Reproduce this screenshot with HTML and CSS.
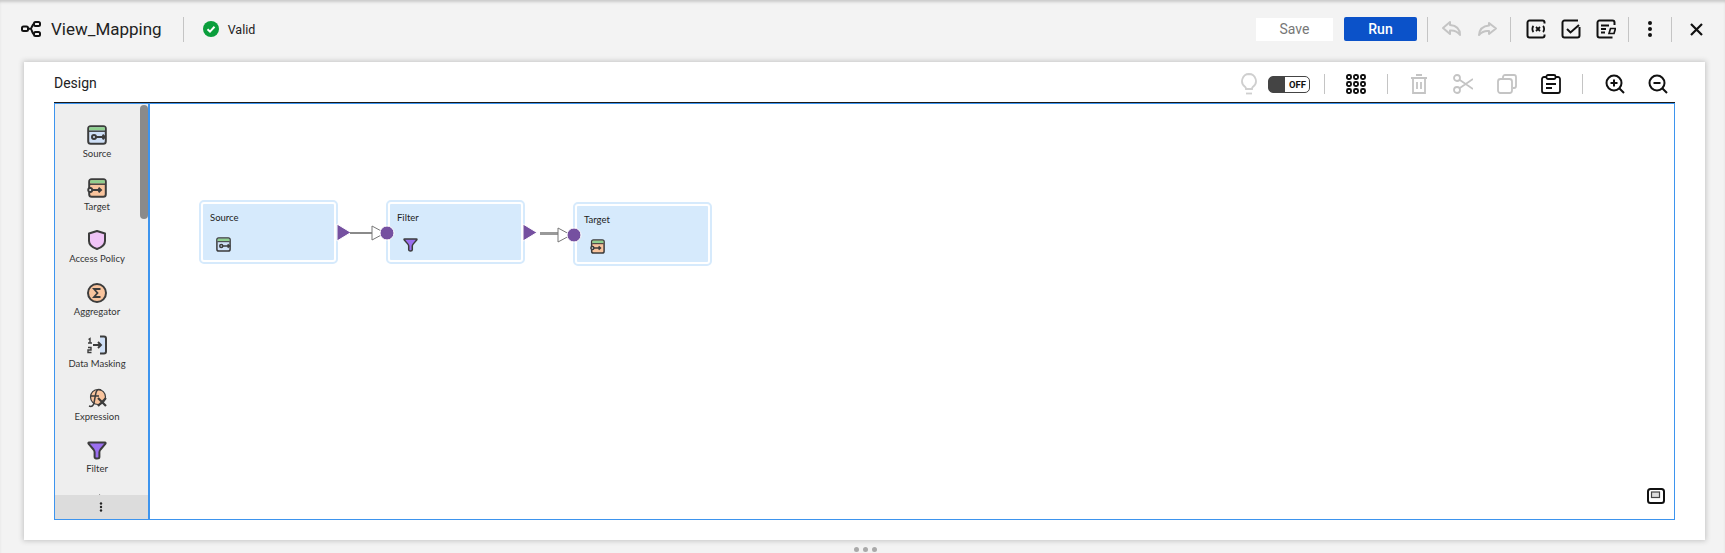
FILE: index.html
```html
<!doctype html>
<html lang="en">
<head>
  <meta charset="UTF-8">
  <title>View_Mapping</title>
  <link rel="stylesheet" href="styles.css">
</head>
<body>
  <svg class="defs" width="0" height="0">
    <symbol id="i-source" viewBox="0 0 20 20">
      <rect x="1.2" y="1.2" width="17.6" height="17.6" rx="2.5" fill="#cfe0f7" stroke="#3c3c3c" stroke-width="2"/>
      <rect x="2.2" y="2.2" width="15.6" height="3.2" fill="#8fd08f"/>
      <path d="M2 6.2h16" stroke="#3c3c3c" stroke-width="1.4"/>
      <circle cx="7" cy="12" r="2" fill="none" stroke="#3c3c3c" stroke-width="2"/>
      <path d="M9 12h9M15.5 9.8l2.5 2.2-2.500 2.200" fill="none" stroke="#3c3c3c" stroke-width="1.900"/>
    </symbol>
    <symbol id="i-target" viewBox="0 0 20 20">
      <rect x="2.2" y="1.2" width="16.6" height="17.6" rx="2.5" fill="#f9c49d" stroke="#3c3c3c" stroke-width="2"/>
      <rect x="3.2" y="2.2" width="14.6" height="3.2" fill="#8fd08f"/>
      <path d="M3 6.2h15" stroke="#3c3c3c" stroke-width="1.4"/>
      <circle cx="3.2" cy="12" r="2" fill="#eee" stroke="#3c3c3c" stroke-width="1.900"/>
      <path d="M5.2 12h9M11.5 9.8l2.5 2.200-2.500 2.200" fill="none" stroke="#3c3c3c" stroke-width="1.900"/>
    </symbol>
    <symbol id="i-filter" viewBox="0 0 20 20">
      <path d="M2 2.500h16c.6 0 .8.600.5 1.100L13.500 9.500c-.7.900-1.100 1.600-1.100 2.800V17c0 1-1 1.500-2.400 1.500s-2.400-.5-2.400-1.500v-4.700c0-1.200-.4-1.900-1.100-2.800L1.500 3.600C1.200 3.100 1.400 2.500 2 2.500z" fill="#9b6ff0" stroke="#3c3c3c" stroke-width="2" stroke-linejoin="round"/>
    </symbol>
  </svg>

  <div class="page">
    <header class="topbar">
      <svg class="map-icon" width="20" height="16" viewBox="0 0 20 16" fill="none" stroke="#111" stroke-width="2">
        <rect x="1" y="5.500" width="6" height="4.500" rx="1.500"/>
        <rect x="13" y="1" width="6" height="4" rx="1.500"/>
        <rect x="13" y="11" width="6" height="4" rx="1.500"/>
        <path d="M7 7.700h2.500c1.500 0 1.500-4.700 3.500-4.700M9.500 7.700c1.500 0 1.500 5.300 3.500 5.300"/>
      </svg>
      <h1 class="title">View_Mapping</h1>
      <span class="sep sep-title"></span>
      <svg class="valid-icon" width="16" height="16" viewBox="0 0 16 16">
        <circle cx="8" cy="8" r="8" fill="#0a9e3c"/>
        <path d="M4.500 8.200l2.500 2.400 4.500-4.800" fill="none" stroke="#fff" stroke-width="2"/>
      </svg>
      <span class="valid-text">Valid</span>

      <div class="top-actions">
        <button class="btn btn-save">Save</button>
        <button class="btn btn-run">Run</button>
        <span class="sep sep-run"></span>
        <svg class="ic-undo" width="21" height="18" viewBox="0 0 21 18" fill="none" stroke="#c4c4c4" stroke-width="2" stroke-linejoin="round">
          <path d="M9 2L2 8l7 6v-3.500c4-.5 7 .5 10 4.500 0-6-4-9.500-10-10V2z"/>
        </svg>
        <svg class="ic-redo" width="21" height="18" viewBox="0 0 21 18" fill="none" stroke="#c4c4c4" stroke-width="2" stroke-linejoin="round">
          <path d="M12 3l7 5.500-7 5.500v-3c-4-.5-7 .5-10 4 .5-5.500 4-9 10-9.500V3z"/>
        </svg>
        <span class="sep sep-edit"></span>
        <svg class="ic" width="20" height="20" viewBox="0 0 20 20" fill="none" stroke="#111" stroke-width="2">
          <path d="M18.500 4.500V3.500a2 2 0 0 0-2-2h-13a2 2 0 0 0-2 2v13a2 2 0 0 0 2 2h13a2 2 0 0 0 2-2v-1"/>
          <path d="M7.500 7c-1.500 1.500-1.500 4.500 0 6M17 7c1.500 1.500 1.500 4.500 0 6M10 8l4 4M14 8l-4 4" stroke-width="1.800"/>
        </svg>
        <svg class="ic" width="20" height="20" viewBox="0 0 20 20" fill="none" stroke="#111" stroke-width="2">
          <path d="M18.500 8v8.500a2 2 0 0 1-2 2h-13a2 2 0 0 1-2-2v-13a2 2 0 0 1 2-2H17"/>
          <path d="M6 10l3.500 3.500L18 6"/>
        </svg>
        <svg class="ic" width="20" height="20" viewBox="0 0 20 20" fill="none" stroke="#111" stroke-width="2">
          <path d="M18.500 6V3.500a2 2 0 0 0-2-2h-13a2 2 0 0 0-2 2v13a2 2 0 0 0 2 2h13"/>
          <path d="M5 6.500h8M5 10h5M5 13.500h4" stroke-width="1.800"/>
          <path d="M13 14.500l1.500-5h5l-1.500 5z" stroke-width="1.700"/>
        </svg>
        <span class="sep sep-more"></span>
        <svg class="ic-dots" width="6" height="16" viewBox="0 0 6 16" fill="#111">
          <circle cx="3" cy="2" r="2"/><circle cx="3" cy="8" r="2"/><circle cx="3" cy="14" r="2"/>
        </svg>
        <span class="sep sep-close"></span>
        <svg class="ic-close" width="13" height="13" viewBox="0 0 13 13" stroke="#111" stroke-width="2.200">
          <path d="M1 1l11 11M12 1L1 12"/>
        </svg>
      </div>
    </header>

    <section class="card">
      <div class="card-head">
        <span class="design">Design</span>
        <div class="tools">
          <svg class="t-bulb" width="16" height="22" viewBox="0 0 16 22" fill="none" stroke="#cfcfcf" stroke-width="1.800">
            <path d="M8 1a7 7 0 0 0-4 12.700c.8.700 1 1.300 1 2.300h6c0-1 .2-1.600 1-2.300A7 7 0 0 0 8 1z"/>
            <path d="M5 20.500h6"/>
          </svg>
          <span class="toggle"><span class="toggle-off">OFF</span></span>
          <span class="sep sep-a"></span>
          <svg class="t-grid" width="20" height="20" viewBox="0 0 20 20" fill="none" stroke="#111" stroke-width="1.900">
            <rect x="1" y="1" width="4" height="4" rx="1.500"/><rect x="8" y="1" width="4" height="4" rx="1.500"/><rect x="15" y="1" width="4" height="4" rx="1.500"/>
            <rect x="1" y="8" width="4" height="4" rx="1.500"/><rect x="8" y="8" width="4" height="4" rx="1.500"/><rect x="15" y="8" width="4" height="4" rx="1.500"/>
            <rect x="1" y="15" width="4" height="4" rx="1.500"/><rect x="8" y="15" width="4" height="4" rx="1.500"/><rect x="15" y="15" width="4" height="4" rx="1.500"/>
          </svg>
          <span class="sep sep-b"></span>
          <svg class="t-trash" width="16" height="20" viewBox="0 0 16 20" fill="none" stroke="#c4c4c4" stroke-width="1.800">
            <path d="M0 4h16M5 1h6M2 4v15h12V4M6 8v7M10 8v7"/>
          </svg>
          <svg class="t-cut" width="20" height="20" viewBox="0 0 20 20" fill="none" stroke="#c4c4c4" stroke-width="1.800">
            <circle cx="4" cy="4" r="3"/><circle cx="4" cy="16" r="3"/>
            <path d="M6.500 5.800L20 15M6.500 14.200L20 5"/>
          </svg>
          <svg class="t-copy" width="20" height="20" viewBox="0 0 20 20" fill="none" stroke="#c4c4c4" stroke-width="1.800">
            <path d="M6 4V3a2 2 0 0 1 2-2h9a2 2 0 0 1 2 2v9a2 2 0 0 1-2 2h-1"/>
            <rect x="1" y="5" width="14" height="14" rx="2.500"/>
          </svg>
          <svg class="t-paste" width="20" height="20" viewBox="0 0 20 20" fill="none" stroke="#111" stroke-width="1.800">
            <path d="M5 3H3a2 2 0 0 0-2 2v12a2 2 0 0 0 2 2h14a2 2 0 0 0 2-2V5a2 2 0 0 0-2-2h-2"/>
            <rect x="5.500" y="1" width="9" height="4" rx="1.500"/>
            <path d="M5 10h10M5 14h6"/>
          </svg>
          <span class="sep sep-c"></span>
          <svg class="t-zin" width="20" height="20" viewBox="0 0 20 20" fill="none" stroke="#111" stroke-width="2">
            <circle cx="9" cy="9" r="7.500"/><path d="M14.500 14.500L19 19M5.500 9h7M9 5.500v7"/>
          </svg>
          <svg class="t-zout" width="20" height="20" viewBox="0 0 20 20" fill="none" stroke="#111" stroke-width="2">
            <circle cx="9" cy="9" r="7.500"/><path d="M14.500 14.500L19 19M5.500 9h7"/>
          </svg>
        </div>
      </div>

      <div class="canvas">
        <aside class="palette">
          <div class="palette-items">
            <div class="pal-item">
              <svg width="20" height="20"><use href="#i-source"/></svg>
              <span>Source</span>
            </div>
            <div class="pal-item">
              <svg width="20" height="20"><use href="#i-target"/></svg>
              <span>Target</span>
            </div>
            <div class="pal-item">
              <svg width="20" height="20" viewBox="0 0 20 20">
                <path d="M10 1l8 2.500V11c0 4-3.500 6.500-8 8-4.500-1.500-8-4-8-8V3.500z" fill="#f0c4f7" stroke="#3c3c3c" stroke-width="2" stroke-linejoin="round"/>
              </svg>
              <span>Access Policy</span>
            </div>
            <div class="pal-item">
              <svg width="20" height="20" viewBox="0 0 20 20">
                <circle cx="10" cy="10" r="9" fill="#f9c49d" stroke="#3c3c3c" stroke-width="2"/>
                <path d="M13.500 6H7l3.500 4L7 14h6.500" fill="none" stroke="#3c3c3c" stroke-width="1.800"/>
              </svg>
              <span>Aggregator</span>
            </div>
            <div class="pal-item">
              <svg width="20" height="20" viewBox="0 0 20 20">
                <path d="M13 1.500h4a2 2 0 0 1 2 2v13a2 2 0 0 1-2 2h-4" fill="#cfe0f7" stroke="#3c3c3c" stroke-width="2"/>
                <path d="M6 10h8M11 7l3 3-3 3" fill="none" stroke="#3c3c3c" stroke-width="1.900"/>
                <path d="M1.500 4.500L3 3.500V8M1 8h4M1 12.500h3v2.500H1v2.500h3.500" fill="none" stroke="#3c3c3c" stroke-width="1.400"/>
              </svg>
              <span>Data Masking</span>
            </div>
            <div class="pal-item">
              <svg width="20" height="20" viewBox="0 0 20 20">
                <circle cx="11" cy="9" r="7.500" fill="#f9c49d" stroke="#3c3c3c" stroke-width="1.200"/>
                <path d="M14 2c-4-1.500-5 1-5.500 5L7 15c-.5 3-2.500 4-5 3M3.500 8H12" fill="none" stroke="#3c3c3c" stroke-width="1.500"/>
                <path d="M11 10l8 8M19 10l-8 8" stroke="#3c3c3c" stroke-width="2.200"/>
              </svg>
              <span>Expression</span>
            </div>
            <div class="pal-item">
              <svg width="20" height="20"><use href="#i-filter"/></svg>
              <span>Filter</span>
            </div>
            <div class="pal-item">
              <svg width="20" height="20" viewBox="0 0 20 20">
                <path d="M4 5h11M12 2l3 3-3 3" fill="none" stroke="#3c3c3c" stroke-width="1.800"/>
              </svg>
            </div>
          </div>
          <div class="scroll-thumb"></div>
          <div class="pal-more">
            <svg width="4" height="10" viewBox="0 0 4 10" fill="#222">
              <circle cx="2" cy="1.500" r="1.200"/><circle cx="2" cy="5" r="1.200"/><circle cx="2" cy="8.500" r="1.200"/>
            </svg>
          </div>
        </aside>

        <div class="board">
          <div class="node node-source">
            <span class="node-name">Source</span>
            <svg width="15" height="15"><use href="#i-source"/></svg>
          </div>
          <div class="node node-filter">
            <span class="node-name">Filter</span>
            <svg width="15" height="15"><use href="#i-filter"/></svg>
          </div>
          <div class="node node-target">
            <span class="node-name">Target</span>
            <svg width="15" height="15"><use href="#i-target"/></svg>
          </div>

          <!-- links between the nodes -->
          <svg class="links" width="600" height="100" viewBox="0 0 600 100">
            <g>
              <path d="M187 30l14 8.500-14 8.500z" fill="#7550a0" stroke="#fff" stroke-width="1"/>
              <path d="M200 39h22" stroke="#8a8a8a" stroke-width="2"/>
              <path d="M222 32l13 7-13 7z" fill="#fff" stroke="#777" stroke-width="1"/>
              <circle cx="237" cy="39" r="7" fill="#7550a0" stroke="#fff" stroke-width="1"/>
            </g>
            <g transform="translate(186 0)">
              <path d="M187 30l14 8.500-14 8.500z" fill="#7550a0" stroke="#fff" stroke-width="1"/>
              <path d="M204 39.500h18" stroke="#999" stroke-width="3"/>
              <path d="M222 34l13 7-13 7z" fill="#fff" stroke="#777" stroke-width="1"/>
              <circle cx="238" cy="41" r="7" fill="#7550a0" stroke="#fff" stroke-width="1"/>
            </g>
          </svg>

          <svg class="minimap" width="18" height="16" viewBox="0 0 18 16" fill="none">
            <rect x="1" y="1" width="16" height="14" rx="2.500" stroke="#111" stroke-width="2"/>
            <rect x="4.500" y="4" width="8" height="5.500" fill="#ddd" stroke="#444" stroke-width="1.200"/>
          </svg>
        </div>
      </div>
    </section>

    <div class="grip"><i></i><i></i><i></i></div>
  </div>
</body>
</html>
```

FILE: styles.css
```css
* {
  margin: 0;
  padding: 0;
  box-sizing: border-box;
}

html, body {
  height: 100%;
  overflow: hidden;
}

body {
  background: #f3f3f3;
  font-family: Roboto, "Liberation Sans", sans-serif;
  color: #222;
}

.defs {
  position: absolute;
}

.page {
  height: 553px;
  display: flex;
  flex-direction: column;
  box-shadow: inset 0 3px 3px -1px #c9c9c9;
}

svg {
  display: block;
  flex: none;
}

/* top bar */
.topbar {
  height: 62px;
  flex: none;
  display: flex;
  align-items: center;
  padding: 0 22px 4px 21px;
}

.title {
  margin-left: 10px;
  font-size: 17px;
  font-weight: 400;
}

.sep {
  display: block;
  flex: none;
  width: 1px;
  height: 25px;
  background: #c4c4c4;
}

.sep-title { margin-left: 21px; }

.valid-icon { margin-left: 19px; }

.valid-text {
  margin-left: 9px;
  font-size: 12.500px;
}

.top-actions {
  margin-left: auto;
  display: flex;
  align-items: center;
}

.btn {
  font-family: inherit;
  font-size: 14px;
  border: 0;
  height: 23px;
}

.btn-save {
  width: 77px;
  background: #fff;
  color: #777;
}

.btn-run {
  width: 73px;
  height: 24px;
  margin-left: 11px;
  background: #0b52c9;
  color: #fff;
  font-weight: 500;
  border-radius: 2px;
}

.sep-run { margin-left: 10px; }
.ic-undo { margin-left: 13px; }
.ic-redo { margin-left: 15px; }
.sep-edit { margin-left: 12px; }
.ic { margin-left: 15px; }
.sep-more { margin-left: 12px; }
.ic-dots { margin-left: 18px; }
.sep-close { margin-left: 18px; }
.ic-close { margin-left: 18px; }

/* design card */
.card {
  margin: 0 20px 0 24px;
  height: 478px;
  flex: none;
  background: #fff;
  box-shadow: 0 0 5px 1px #c4c4c4;
  padding: 0 30px 20px 30px;
  display: flex;
  flex-direction: column;
}

.card-head {
  height: 41px;
  flex: none;
  display: flex;
  align-items: center;
  justify-content: space-between;
}

.design {
  font-size: 14px;
}

.tools {
  display: flex;
  align-items: center;
  padding: 3px 7px 0 0;
}

.toggle {
  margin-left: 11px;
  width: 42px;
  height: 17px;
  border: 1px solid #444;
  border-radius: 5px;
  background: linear-gradient(to right, #444 40%, #fff 40%);
  display: flex;
  justify-content: flex-end;
  align-items: center;
  padding-right: 3px;
}

.toggle-off {
  font-size: 9.500px;
  font-weight: 700;
  color: #111;
}

.sep-a { height: 20px; margin-left: 14px; }
.t-grid { margin-left: 21px; }
.sep-b { height: 20px; margin-left: 21px; }
.t-trash { margin-left: 23px; }
.t-cut { margin-left: 26px; }
.t-copy { margin-left: 24px; }
.t-paste { margin-left: 24px; }
.sep-c { height: 20px; margin-left: 21px; }
.t-zin { margin-left: 22px; }
.t-zout { margin-left: 23px; }

/* canvas */
.canvas {
  flex: 1;
  display: flex;
  border: 1px solid #3d94ee;
  box-shadow: 0 -1px 0 0 #1a1a1a;
  min-height: 0;
}

.palette {
  position: relative;
  width: 95px;
  flex: none;
  background: #eee;
  border-right: 2px solid #3d94ee;
  display: flex;
  flex-direction: column;
}

.palette-items {
  flex: 1;
  overflow: hidden;
  padding-top: 21px;
  padding-right: 9px;
  min-height: 0;
}

.pal-item {
  height: 52.500px;
  display: flex;
  flex-direction: column;
  align-items: center;
}

.pal-item span {
  margin-top: 3px;
  font-family: Lato, "Liberation Sans", sans-serif;
  font-size: 9.500px;
  white-space: nowrap;
  color: #333;
}

.scroll-thumb {
  position: absolute;
  top: 1px;
  right: 0;
  width: 8px;
  height: 114px;
  background: #8a8a8a;
  border-radius: 4px;
}

.pal-more {
  height: 24px;
  flex: none;
  background: #dcdcdc;
  display: flex;
  align-items: center;
  justify-content: center;
  padding-right: 2px;
}

.board {
  position: relative;
  flex: 1;
  background: #fff;
}

.node {
  position: absolute;
  width: 137px;
  height: 62px;
  background: #d6eafc;
  border: 3px solid #fff;
  outline: 2px solid #d6eafc;
  outline-offset: -1px;
  border-radius: 4px;
  padding: 8px 7px;
  display: flex;
  flex-direction: column;
}

.node-name {
  font-family: Lato, "Liberation Sans", sans-serif;
  font-size: 9.500px;
  color: #222;
}

.node svg {
  position: absolute;
  left: 13px;
  top: 33px;
}

.node-source { left: 50px; top: 97px; }
.node-filter { left: 237px; top: 97px; }
.node-target { left: 424px; top: 99px; }

.links {
  position: absolute;
  left: 0;
  top: 90px;
  pointer-events: none;
}

.minimap {
  position: absolute;
  right: 9px;
  bottom: 15px;
}

/* resize grip */
.grip {
  flex: 1;
  display: flex;
  justify-content: center;
  align-items: center;
  gap: 4px;
  padding-top: 6px;
  padding-left: 6px;
}

.grip i {
  width: 5px;
  height: 5px;
  border-radius: 50%;
  background: #aaa;
}
```
